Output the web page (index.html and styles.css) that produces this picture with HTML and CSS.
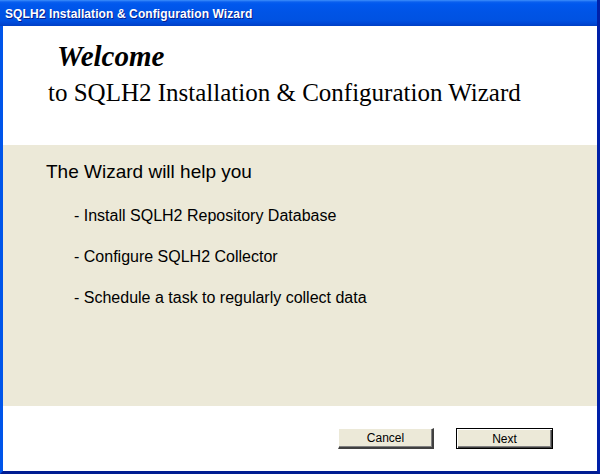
FILE: index.html
```html
<!DOCTYPE html>
<html>
<head>
<meta charset="utf-8">
<link rel="stylesheet" href="styles.css">
</head>
<body>
<div class="window">
  <div class="titlebar"><span class="title">SQLH2 Installation &amp; Configuration Wizard</span></div>
  <div class="client">
    <div class="header">
      <div class="welcome">Welcome</div>
      <div class="subtitle">to SQLH2 Installation &amp; Configuration Wizard</div>
    </div>
    <div class="panel">
      <div class="lead">The Wizard will help you</div>
      <ul class="items">
        <li>- Install SQLH2 Repository Database</li>
        <li>- Configure SQLH2 Collector</li>
        <li>- Schedule a task to regularly collect data</li>
      </ul>
    </div>
    <div class="footer">
      <button class="btn">Cancel</button>
      <button class="btn btn-default">Next</button>
    </div>
  </div>
</div>
</body>
</html>
```
FILE: styles.css
```css
html, body {
  margin: 0;
  padding: 0;
  background: #ffffff;
}
.window {
  width: 600px;
  height: 474px;
  display: flex;
  flex-direction: column;
  box-sizing: border-box;
}
.titlebar {
  height: 26px;
  flex: none;
  box-sizing: border-box;
  background: linear-gradient(to bottom, #3d8ffb 0px, #0a5fef 2px, #0058ee 4px, #0054e6 12px, #0052e2 20px, #0049d8 23px, #003fc4 26px);
  display: flex;
  align-items: center;
  padding-left: 5px;
  padding-top: 1px;
  border-right: 3px solid #0020a8;
}
.title {
  font-family: "Liberation Sans", Arial, sans-serif;
  font-weight: bold;
  font-size: 12px;
  color: #ffffff;
  text-shadow: 1px 1px 0 #0a1e8c;
  letter-spacing: 0.1px;
}
.client {
  flex: 1;
  display: flex;
  flex-direction: column;
  border-left: 3px solid #0055ea;
  border-right: 3px solid #0020a8;
  border-bottom: 3px solid #001c92;
  background: #ffffff;
}
.header {
  height: 119px;
  flex: none;
  box-sizing: border-box;
  padding-top: 16px;
  font-family: "Liberation Serif", "Times New Roman", serif;
  color: #000;
}
.welcome {
  font-size: 29px;
  line-height: 29px;
  font-weight: bold;
  font-style: italic;
  padding-left: 54px;
}
.subtitle {
  font-size: 25px;
  line-height: 25px;
  margin-top: 9px;
  padding-left: 45px;
}
.panel {
  height: 261px;
  flex: none;
  box-sizing: border-box;
  background: #ece9d8;
  padding-top: 17px;
  font-family: "Liberation Sans", Arial, sans-serif;
  color: #000;
}
.lead {
  font-size: 19px;
  line-height: 19px;
  padding-left: 43px;
}
.items {
  list-style: none;
  margin: 27px 0 0 0;
  padding: 0 0 0 71px;
  display: flex;
  flex-direction: column;
  gap: 25px;
}
.items li {
  font-size: 16px;
  line-height: 16px;
}
.footer {
  flex: 1;
  display: flex;
  justify-content: flex-end;
  align-items: flex-start;
  padding-top: 22px;
  padding-right: 44px;
  gap: 22px;
}
.btn {
  width: 96px;
  height: 21px;
  margin: 0;
  padding: 0;
  box-sizing: border-box;
  background: #ece9d8;
  font-family: "Liberation Sans", Arial, sans-serif;
  font-size: 12px;
  color: #000;
  border-style: solid;
  border-width: 1px 2px 2px 1px;
  border-color: #ffffff #404040 #404040 #ffffff;
  box-shadow: inset -1px -1px 0 #808080;
}
.btn-default {
  width: 97px;
  border: 1px solid #000000;
  box-shadow: inset 1px 1px 0 #ffffff, inset -1px -1px 0 #404040, inset -2px -2px 0 #808080;
}
```
